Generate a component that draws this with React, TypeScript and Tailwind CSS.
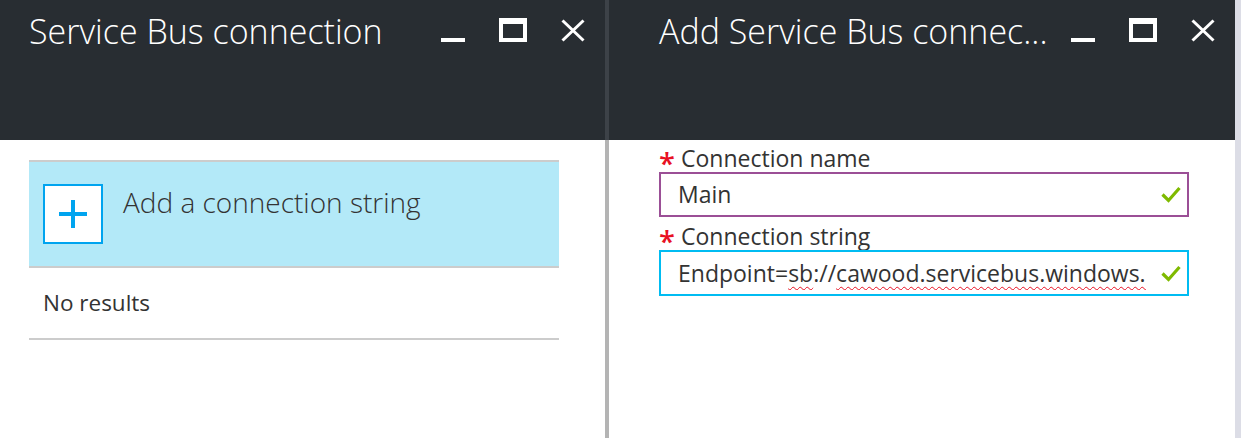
import React from "react";

const font = { fontFamily: '"Segoe UI", "Open Sans", "Noto Sans", sans-serif' };

function Controls() {
  return (
    <div className="flex items-start">
      <div className="mt-[38px] h-[4px] w-[24px] bg-white" />
      <div className="ml-[34px] mt-[18px] h-[24px] w-[28px] border-x-[4px] border-b-[4px] border-t-[6px] border-white" />
      <svg className="ml-[34px] mt-[19px]" width="24" height="23" viewBox="0 0 24 23">
        <path d="M1.5 1.5 L22.5 21.5 M22.5 1.5 L1.5 21.5" stroke="#fff" strokeWidth="3" fill="none" />
      </svg>
    </div>
  );
}

function Check() {
  return (
    <svg width="20" height="17" viewBox="0 0 20 17" className="shrink-0">
      <path d="M1.5 8.5 L7.5 14.5 L18.5 2" stroke="#7fba00" strokeWidth="3.2" fill="none" />
    </svg>
  );
}

function Star() {
  return (
    <span className="mr-[11px] mt-[7px] w-[11px] text-[29px] font-semibold leading-none text-[#e81123]">*</span>
  );
}

export default function App() {
  return (
    <div className="flex h-[438px] w-[1241px] overflow-hidden bg-white text-[#333]" style={font}>
      {/* Left blade */}
      <div className="flex w-[605px] shrink-0 flex-col">
        <div className="flex h-[140px] items-start justify-between bg-[#282d32] pl-[29px] pr-[20px]">
          <div className="mt-[8px] whitespace-nowrap text-[34px] font-light leading-[46px] text-white">
            Service Bus connection
          </div>
          <Controls />
        </div>
        <div className="flex flex-col px-[29px] pt-[20px]" style={{ width: 588 }}>
          <div className="flex h-[108px] items-start border-y-2 border-[#cccccc] bg-[#b3e9f8] pl-[14px]">
            <div className="mt-[22px] flex h-[60px] w-[60px] items-center justify-center border-2 border-[#00a4ef] bg-white">
              <svg width="28" height="28" viewBox="0 0 28 28">
                <rect x="0" y="12" width="28" height="4" fill="#00a4ef" />
                <rect x="12" y="0" width="4" height="28" fill="#00a4ef" />
              </svg>
            </div>
            <div className="ml-[20px] mt-[21px] whitespace-nowrap text-[28px] font-light leading-[38px] text-[#333]">
              Add a connection string
            </div>
          </div>
          <div className="flex h-[72px] items-center border-b-2 border-[#cccccc] pl-[14px] text-[22.5px] text-[#333]">
            No results
          </div>
        </div>
      </div>

      {/* Divider */}
      <div className="flex w-[4px] shrink-0 flex-col">
        <div className="h-[140px] bg-[#3d4248]" />
        <div className="flex-1 bg-[#b4b4b4]" />
      </div>

      {/* Right blade */}
      <div className="flex w-[626px] shrink-0 flex-col">
        <div className="flex h-[140px] items-start justify-between bg-[#282d32] pl-[50px] pr-[20px]">
          <div className="mt-[8px] whitespace-nowrap text-[34px] font-light leading-[46px] text-white">
            Add Service Bus connec...
          </div>
          <Controls />
        </div>
        <div className="flex flex-col pl-[50px] pt-[5px]" style={{ width: 580 }}>
          <div className="flex h-[27px] items-center text-[23px] leading-[27px]">
            <Star />
            <span className="text-[#333]">Connection name</span>
          </div>
          <div className="flex h-[45px] items-center border-2 border-[#9b4f96] pl-[17px] pr-[6px]">
            <div className="flex-1 overflow-hidden whitespace-nowrap text-[23px] text-[#333]">Main</div>
            <Check />
          </div>
          <div className="mt-[6px] flex h-[27px] items-center text-[23px] leading-[27px]">
            <Star />
            <span className="text-[#333]">Connection string</span>
          </div>
          <div className="flex h-[46px] items-center border-2 border-[#00bcf2] pl-[17px] pr-[6px]">
            <div className="mr-[15px] min-w-0 flex-1 overflow-hidden whitespace-nowrap text-[23px] text-[#333]">
              Endpoint=
              <span className="underline decoration-[#e81123] decoration-wavy decoration-1 underline-offset-[4px]">sb</span>
              ://
              <span className="underline decoration-[#e81123] decoration-wavy decoration-1 underline-offset-[4px]">
                cawood.servicebus.windows.net
              </span>
            </div>
            <Check />
          </div>
        </div>
      </div>

      {/* Right edge strip */}
      <div className="w-[6px] shrink-0 bg-[#dcdde6]" />
    </div>
  );
}
